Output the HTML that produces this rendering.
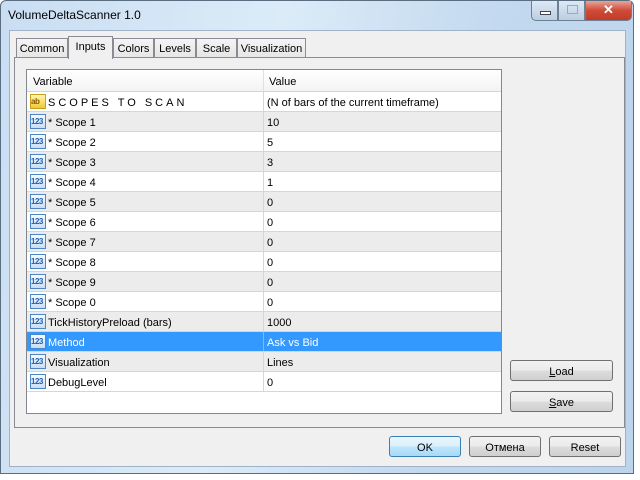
<!DOCTYPE html>
<html><head><meta charset="utf-8"><style>
*{box-sizing:border-box;margin:0;padding:0}
body{width:640px;height:480px;background:#fff;font-family:"Liberation Sans",Tahoma,sans-serif;font-size:11px;color:#000;position:relative;overflow:hidden}
.win{position:absolute;left:0;top:0;width:634px;height:474px;border:1px solid #5b6d80;border-radius:6px 6px 0 0;background:linear-gradient(100deg,#c9def3 0,#dcebf8 40%,#c3d9ef 70%,#bcd4ec 100%)}
.title{position:absolute;left:7px;top:7px;font-size:12px;color:#000}
.client{position:absolute;left:8px;top:29px;width:617px;height:437px;background:#f0f0f0;border:1px solid #9fb2c8}
.wb{position:absolute;top:0;height:20px;border:1px solid #6c7f95;border-top:none}
.page{position:absolute;left:14px;top:57px;width:611px;height:371px;border:1px solid #898c95;background:#f0f0f0}
.tab{position:absolute;top:38px;height:20px;border:1px solid #898c95;border-bottom:none;background:linear-gradient(#f4f4f4,#e6e6e6);text-align:center;line-height:21px;font-size:11px}
.tab.sel{top:36px;height:23px;background:#f0f0f0;z-index:2;line-height:21px}
.grid{position:absolute;left:26px;top:69px;width:476px;height:345px;border:1px solid #828790;background:#fff}
.row{position:absolute;left:0;width:474px;height:20px;border-bottom:1px solid #d6d6d6;line-height:22px}
.row .a{position:absolute;left:21px;top:0}
.row .b{position:absolute;left:236px;top:0;height:19px;border-left:1px solid #d6d6d6;padding-left:3px;width:238px}
.g{background:#ececec}
.s{background:#3399ff;color:#fff}
.s .b{border-left-color:#7ab8ff}
.ic{position:absolute;left:3px;top:2px;width:16px;height:15px;border:1px solid #4a86c8;background:linear-gradient(#f4f9ff,#c8def5);font-size:8px;color:#2262b0;line-height:13px;text-align:left;letter-spacing:-0.5px;font-weight:bold}
.ic2{border-color:#c9a11c;background:linear-gradient(#fff6b0,#f0c830);color:#8a5a00}
.hdr{position:absolute;left:0;top:0;width:474px;height:22px;background:linear-gradient(#fff,#f3f3f3);border-bottom:1px solid #d5d5d5;line-height:24px}
.btn{position:absolute;height:21px;border:1px solid #707070;border-radius:3px;background:linear-gradient(#f2f2f2 0,#ebebeb 50%,#dddddd 51%,#cfcfcf 100%);text-align:center;line-height:22px;font-size:11px}
</style></head><body>
<div class="win">
<div class="title">VolumeDeltaScanner 1.0</div>
<div class="wb" style="left:530px;width:27px;border-radius:0 0 0 5px;background:linear-gradient(#dde9f5,#bccee2)"><div style="position:absolute;left:8px;top:10px;width:11px;height:4px;background:#fff;border:1px solid #445"></div></div>
<div class="wb" style="left:557px;width:27px;background:linear-gradient(#dde9f5,#bccee2)"><div style="position:absolute;left:8px;top:4px;width:11px;height:9px;border:1px solid #9ab"></div></div>
<div class="wb" style="left:584px;width:47px;border-radius:0 0 5px 0;background:linear-gradient(#e8a598,#cf4b37 50%,#c23b28);color:#fff;font-weight:bold;text-align:center;font-size:13px;line-height:17px">✕</div>
<div class="client"></div>
</div>
<div class="tab" style="left:16px;width:52px">Common</div>
<div class="tab sel" style="left:68px;width:45px">Inputs</div>
<div class="tab" style="left:113px;width:41px">Colors</div>
<div class="tab" style="left:154px;width:42px">Levels</div>
<div class="tab" style="left:196px;width:41px">Scale</div>
<div class="tab" style="left:237px;width:69px">Visualization</div>
<div class="page"></div>
<div class="grid">
<div class="hdr"><span style="position:absolute;left:6px">Variable</span><span style="position:absolute;left:236px;height:21px;border-left:1px solid #e0e0e0;padding-left:5px">Value</span></div>
<div class="row" style="top:22px"><div class="ic ic2">ab</div><span class="a" style="letter-spacing:3px">SCOPES TO SCAN</span><span class="b">(N of bars of the current timeframe)</span></div>
<div class="row g" style="top:42px"><div class="ic">123</div><span class="a">* Scope 1</span><span class="b">10</span></div>
<div class="row" style="top:62px"><div class="ic">123</div><span class="a">* Scope 2</span><span class="b">5</span></div>
<div class="row g" style="top:82px"><div class="ic">123</div><span class="a">* Scope 3</span><span class="b">3</span></div>
<div class="row" style="top:102px"><div class="ic">123</div><span class="a">* Scope 4</span><span class="b">1</span></div>
<div class="row g" style="top:122px"><div class="ic">123</div><span class="a">* Scope 5</span><span class="b">0</span></div>
<div class="row" style="top:142px"><div class="ic">123</div><span class="a">* Scope 6</span><span class="b">0</span></div>
<div class="row g" style="top:162px"><div class="ic">123</div><span class="a">* Scope 7</span><span class="b">0</span></div>
<div class="row" style="top:182px"><div class="ic">123</div><span class="a">* Scope 8</span><span class="b">0</span></div>
<div class="row g" style="top:202px"><div class="ic">123</div><span class="a">* Scope 9</span><span class="b">0</span></div>
<div class="row" style="top:222px"><div class="ic">123</div><span class="a">* Scope 0</span><span class="b">0</span></div>
<div class="row g" style="top:242px"><div class="ic">123</div><span class="a">TickHistoryPreload (bars)</span><span class="b">1000</span></div>
<div class="row s" style="top:262px"><div class="ic">123</div><span class="a">Method</span><span class="b">Ask vs Bid</span></div>
<div class="row g" style="top:282px"><div class="ic">123</div><span class="a">Visualization</span><span class="b">Lines</span></div>
<div class="row" style="top:302px"><div class="ic">123</div><span class="a">DebugLevel</span><span class="b">0</span></div>
</div>
<div class="btn" style="left:510px;top:360px;width:103px"><u>L</u>oad</div>
<div class="btn" style="left:510px;top:391px;width:103px"><u>S</u>ave</div>
<div class="btn" style="left:389px;top:436px;width:72px;border-color:#3c7fb1;background:linear-gradient(#eaf6fd,#d9f0fc 50%,#bee6fd 51%,#a7d9f5)">OK</div>
<div class="btn" style="left:469px;top:436px;width:72px">Отмена</div>
<div class="btn" style="left:549px;top:436px;width:72px">Reset</div>
</body></html>
